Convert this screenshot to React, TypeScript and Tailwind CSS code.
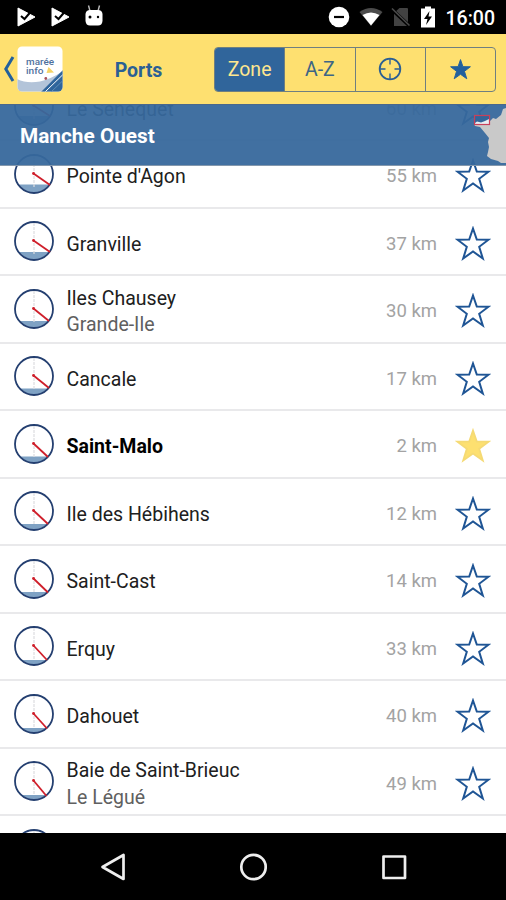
import { useState } from "react";
import clsx from "clsx";

type Port = {
    name: string;
    detail?: string;
    distance: string;
    // tide hand end point and water level inside the 42px dial
    hand: [number, number];
    water: number;
};

const PORTS: Port[] = [
    { name: "Le Sénéquet", distance: "60 km", hand: [37, 31], water: 31 },
    { name: "Pointe d'Agon", distance: "55 km", hand: [37, 32], water: 31.5 },
    { name: "Granville", distance: "37 km", hand: [37, 32], water: 32 },
    { name: "Iles Chausey", detail: "Grande-Ile", distance: "30 km", hand: [36, 33], water: 33 },
    { name: "Cancale", distance: "17 km", hand: [36, 33], water: 33.5 },
    { name: "Saint-Malo", distance: "2 km", hand: [35, 34], water: 33.5 },
    { name: "Ile des Hébihens", distance: "12 km", hand: [35, 34], water: 34 },
    { name: "Saint-Cast", distance: "14 km", hand: [35, 34.5], water: 34 },
    { name: "Erquy", distance: "33 km", hand: [34, 35], water: 35 },
    { name: "Dahouet", distance: "40 km", hand: [34, 35.5], water: 35 },
    { name: "Baie de Saint-Brieuc", detail: "Le Légué", distance: "49 km", hand: [33.5, 36], water: 35 },
    { name: "Binic", distance: "55 km", hand: [33, 36], water: 35 },
];

const STAR = "M18 2.5 L21.8 13.5 L33.5 13.7 L24.2 20.8 L27.8 32.5 L18 25.5 L8.2 32.5 L11.8 20.8 L2.5 13.7 L14.2 13.5 Z";

function TideDial({ hand, water }: { hand: [number, number]; water: number }) {
    const half = Math.sqrt(18.5 * 18.5 - (water - 21) * (water - 21));
    return (
        <svg width="42" height="42" viewBox="0 0 42 42" className="shrink-0">
            <circle cx="21" cy="21" r="19" fill="white" />
            <path
                d={`M${21 - half} ${water} A18.5 18.5 0 0 0 ${21 + half} ${water} Z`}
                fill="#7fa2c4"
            />
            <path d="M21 3 V34" stroke="#dcdce0" strokeWidth="1.2" strokeDasharray="3 1" />
            <circle cx="21" cy="21" r="19" fill="none" stroke="#243f70" strokeWidth="1.8" />
            <path d={`M20.5 20.5 L${hand[0]} ${hand[1]}`} stroke="#cf1f2b" strokeWidth="1.8" />
            <circle cx="20.5" cy="20.5" r="1.4" fill="#cf1f2b" />
        </svg>
    );
}

function StarIcon({ filled }: { filled: boolean }) {
    return (
        <svg width="36" height="36" viewBox="0 0 36 36">
            <path
                d={STAR}
                fill={filled ? "#fde070" : "none"}
                stroke={filled ? "#f5da74" : "#1f5595"}
                strokeWidth={filled ? 1.8 : 2}
            />
        </svg>
    );
}

function PlayCheck() {
    return (
        <svg width="20" height="20" viewBox="0 0 20 20">
            <path d="M2 1 L19 10 L2 19 Z" fill="#fff" stroke="#fff" strokeLinejoin="round" />
            <path d="M5 9 L8.5 12 L15 4.5" fill="none" stroke="#000" strokeWidth="2" />
        </svg>
    );
}

function StatusBar() {
    return (
        <div className="h-[34px] shrink-0 bg-black flex items-center justify-between pl-4 pr-[11px]">
            <div className="flex items-center gap-[14px]">
                <PlayCheck />
                <PlayCheck />
                <svg width="20" height="22" viewBox="0 0 20 22" className="-mt-[2px]">
                    <path d="M4.5 0.5 L6 6 M15.5 0.5 L14 6" stroke="#bbb" strokeWidth="1.4" />
                    <path d="M1.5 9 Q2 5 6 5 H14 Q18 5 18.5 9 V16 Q18 20.5 14 20.5 H6 Q2 20.5 1.5 16 Z" fill="#fff" />
                    <circle cx="6" cy="12" r="1.5" />
                    <circle cx="14" cy="12" r="1.2" />
                </svg>
            </div>
            <div className="flex items-center">
                <svg width="22" height="22" viewBox="0 0 22 22">
                    <circle cx="11" cy="11" r="10.3" fill="#fff" />
                    <path d="M6 11 H16" stroke="#000" strokeWidth="2.2" />
                </svg>
                <svg width="24" height="20" viewBox="0 0 24 20" className="ml-[9px]">
                    <path d="M0.5 5 Q12 -3 23.5 5 L12 19 Z" fill="#4b4b4b" />
                    <path d="M3.5 8 Q12 3 20.5 8 L12 18.5 Z" fill="#fff" />
                </svg>
                <svg width="20" height="20" viewBox="0 0 20 20" className="ml-[8px]">
                    <path d="M8.5 1 H16 Q17 1 17 2 V18 Q17 19 16 19 H3 V6 Z" fill="#424242" />
                    <path d="M0 1.5 L18.5 19" stroke="#000" strokeWidth="3.5" />
                    <path d="M1 1.5 L18.5 18.5" stroke="#4b4b4b" strokeWidth="1.6" />
                </svg>
                <svg width="16" height="22" viewBox="0 0 16 22" className="ml-[9px]">
                    <path d="M5 0.5 H11 V2.5 H15 V21.5 H1 V2.5 H5 Z" fill="#fff" />
                    <path d="M9.5 5 L4 13 H7.5 L6 19 L12 10.5 H8.5 Z" fill="#000" />
                </svg>
                <span className="ml-[10px] pt-[3px] text-[19.5px] leading-none font-medium text-white">16:00</span>
            </div>
        </div>
    );
}

function AppLogo() {
    return (
        <svg width="46" height="46" viewBox="0 0 46 46">
            <defs>
                <clipPath id="logo-frame">
                    <rect x="0.5" y="0.5" width="45" height="45" rx="4.5" />
                </clipPath>
            </defs>
            <g clipPath="url(#logo-frame)">
                <rect width="46" height="46" fill="#fff" />
                <path d="M0 33 Q10 38 23 35.5 Q34 33 46 25 V46 H0 Z" fill="#b3c4d9" />
                <path d="M46 24 V46 H24 Z" fill="#2f659c" />
                <path d="M28 46 L46 28.5" stroke="#fff" strokeWidth="1" />
                <path d="M34 46 L46 34.5" stroke="#5f8bb5" strokeWidth="1" />
                <path d="M31.5 21 L37 26.5 L29.5 27 Z" fill="#f5d365" />
                <circle cx="28.8" cy="32.5" r="1.4" fill="#a8525c" />
            </g>
            <text x="9" y="19" className="text-[9px] font-medium" fill="#4f719e" textLength="28" lengthAdjust="spacingAndGlyphs">marée</text>
            <text x="9" y="27.8" className="text-[8.5px] font-medium" fill="#4f719e" textLength="17.5" lengthAdjust="spacingAndGlyphs">info</text>
        </svg>
    );
}

const TABS = ["zone", "alpha", "near", "fav"];

function TabContent({ tab }: { tab: string }) {
    if (tab === "zone") return <span>Zone</span>;
    if (tab === "alpha") return <span>A-Z</span>;
    if (tab === "near") {
        return (
            <svg width="24" height="24" viewBox="0 0 24 24" fill="none" stroke="#2b5f94" strokeWidth="1.8">
                <circle cx="12" cy="12" r="10.3" />
                <path d="M12 2 V7.5 M12 16.5 V22 M2 12 H7.5 M16.5 12 H22" strokeWidth="1.4" />
            </svg>
        );
    }
    return (
        <svg width="23" height="23" viewBox="0 0 36 36">
            <path d={STAR} fill="#22609c" stroke="#22609c" strokeWidth="1.5" />
        </svg>
    );
}

function Header() {
    const [active, setActive] = useState("zone");

    return (
        <header className="h-[71px] shrink-0 bg-[#fee070] border-b border-[#4a688c] flex items-center pl-[3px] pr-[10px]">
            <button className="flex items-center">
                <svg width="12" height="28" viewBox="0 0 12 28" fill="none" stroke="#22609c" strokeWidth="3">
                    <path d="M10 2 L2.8 14 L10 26" />
                </svg>
                <span className="ml-[2px]">
                    <AppLogo />
                </span>
            </button>
            <h1 className="flex-1 text-center text-[19.5px] font-bold text-[#2b6094] pt-[3px]">Ports</h1>
            <div className="w-[282px] h-[45px] flex border border-[#6f7f80] rounded-[4px] overflow-hidden">
                {TABS.map((tab, i) => (
                    <button
                        key={tab}
                        onClick={() => setActive(tab)}
                        className={clsx(
                            "flex-1 flex items-center justify-center text-[19.5px]",
                            i > 0 && "border-l border-[#6f7f80]",
                            i < 2 && "pt-[2px]",
                            active === tab ? "bg-[#30659b] text-[#fee78f]" : "text-[#3d6586]"
                        )}
                    >
                        <TabContent tab={tab} />
                    </button>
                ))}
            </div>
        </header>
    );
}

function ZoneTitle() {
    return (
        <div className="absolute inset-x-0 top-0 h-[61px] bg-[#37689c]/95 border-b border-[#8498ad] flex items-center pl-5">
            <h2 className="text-[20.8px] font-bold text-white pt-[4px]">Manche Ouest</h2>
            <svg width="60" height="60" viewBox="0 0 60 60" className="absolute right-0 top-0">
                <path
                    d="M60 3 L57 4 L55 10 L50 14 L47 13 L44 16 L36 18 L28 19 L29 21 L34 22 L39 28 L43 33 L42 37 L43 42 L42 47 L41 51 L45 54 L52 56 L55 58 L60 58 Z"
                    fill="#c9c9c9"
                />
                <rect x="29" y="11" width="14" height="8" fill="#33659a" />
                <path d="M29 18 L31 16.5 L35 17.5 L39 16 L43 14 V19 H29 Z" fill="#e9edf2" />
                <rect x="28.5" y="10.5" width="15" height="9" fill="none" stroke="#c8405a" strokeWidth="1.2" />
            </svg>
        </div>
    );
}

function PortRow({ port, favorite, onToggle }: { port: Port; favorite: boolean; onToggle: () => void }) {
    return (
        <li className="h-[67.5px] flex items-center border-b-2 border-[#e9e9eb] pl-[13px] pr-[15px]">
            <TideDial hand={port.hand} water={port.water} />
            <div className="flex-1 ml-[11.5px] pt-[7px] text-[19.5px] leading-[26.5px]">
                <p className={favorite ? "font-bold text-black" : "text-[#202020]"}>{port.name}</p>
                {port.detail && <p className="text-[#606060]">{port.detail}</p>}
            </div>
            <span className="pt-[7px] text-[18.5px] text-[#a3a3a3]">{port.distance}</span>
            <button onClick={onToggle} className="ml-[18px] pt-[5px]">
                <StarIcon filled={favorite} />
            </button>
        </li>
    );
}

function NavigationBar() {
    return (
        <nav className="h-[67px] shrink-0 bg-black flex items-center justify-center gap-[112px]">
            <svg width="28" height="28" viewBox="0 0 28 28" fill="none" stroke="#eee" strokeWidth="2.7" strokeLinejoin="round">
                <path d="M24.5 2 V26 L3.5 14 Z" />
            </svg>
            <svg width="28" height="28" viewBox="0 0 28 28" fill="none" stroke="#eee" strokeWidth="2.7">
                <circle cx="14.5" cy="14" r="12.2" />
            </svg>
            <svg width="28" height="28" viewBox="0 0 28 28" fill="none" stroke="#eee" strokeWidth="2.7" strokeLinejoin="round">
                <rect x="4.5" y="3.5" width="21.5" height="21.5" />
            </svg>
        </nav>
    );
}

export default function App() {
    const [favorite, setFavorite] = useState("Saint-Malo");

    return (
        <div className="w-[506px] h-[900px] flex flex-col overflow-hidden bg-white font-['Roboto',sans-serif]">
            <StatusBar />
            <Header />
            <main className="relative flex-1 min-h-0 overflow-hidden">
                <ul className="-mt-[31.5px]">
                    {PORTS.map((port) => (
                        <PortRow
                            key={port.name}
                            port={port}
                            favorite={favorite === port.name}
                            onToggle={() => setFavorite(port.name)}
                        />
                    ))}
                </ul>
                <ZoneTitle />
            </main>
            <NavigationBar />
        </div>
    );
}
